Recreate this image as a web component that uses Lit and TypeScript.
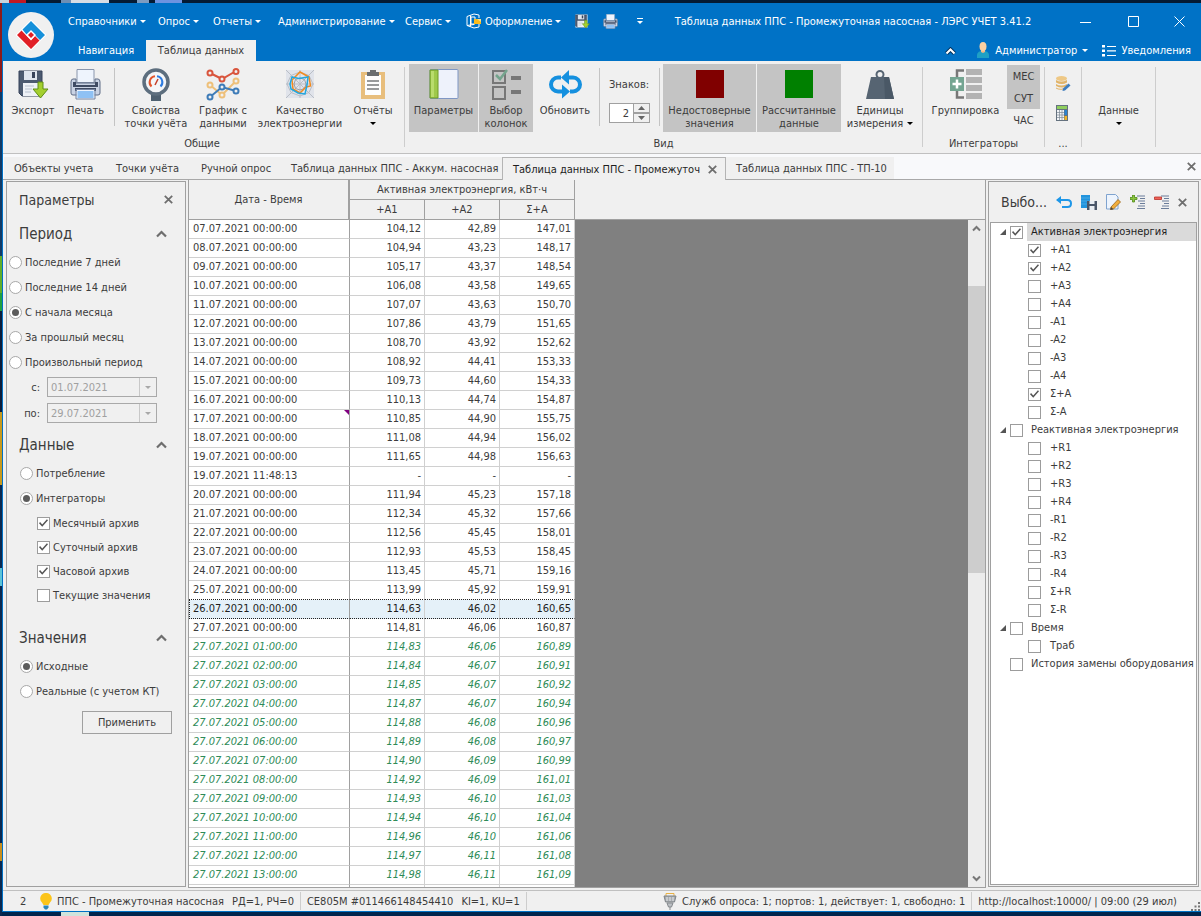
import { LitElement, html, svg, css, nothing } from "lit";
import { customElement } from "lit/decorators.js";

const icon = (w: number, h: number, box: string, body: unknown) =>
  html`<svg width=${w} height=${h} viewBox=${box} aria-hidden="true">${body}</svg>`;

const floppyBody = svg`
  <path d="M1 2h23v25H4l-3-3z" fill="#4c5a70" stroke="#37435a"/>
  <path d="M6 2h13v9H6z" fill="#dfe5ee"/><path d="M14 3h3v6h-3z" fill="#37435a"/>
  <path d="M5 14h15v13H5z" fill="#eef1f6"/><path d="M7 17h9M7 20h7M7 23h6" stroke="#b7c0ce"/>
  <path d="M20 13h5v7h5l-7.500 9-7.500-9h5z" fill="#a4cf2f" stroke="#5f8f14"/>`;
const printerBody = svg`
  <path d="M7 0.500h17v13H7z" fill="#eef4fd" stroke="#8a96ac"/>
  <path d="M3 10q-2 0-2 3v11q0 2 2 2h25q2 0 2-2V13q0-3-2-3h-3v4H6v-4z" fill="#c9d2e3" stroke="#5f6c86"/>
  <path d="M3 13h3v3h19v-3h3v5H3z" fill="#3f4b63"/>
  <path d="M5 19h21v3H5z" fill="#3f4b63"/>
  <path d="M7 21.500h17v8H7z" fill="#8fc1f4" stroke="#eef4fd"/><path d="M6 20.500h19v9.500H6z" fill="none" stroke="#7583a0"/>`;

const ICONS: Record<string, unknown> = {
  blank: icon(28, 28, "0 0 28 28", nothing),
  floppy: icon(31, 31, "0 0 31 31", floppyBody),
  floppySmall: icon(15, 15, "0 0 31 31", svg`<path d="M1 1h25v27H1z" fill="#e6ecf5"/>${floppyBody}`),
  printer: icon(31, 31, "0 0 31 31", printerBody),
  printerSmall: icon(15, 15, "0 0 31 31", printerBody),
  meter: icon(28, 33, "0 0 28 33", svg`
    <path d="M9 24h10v9H9z" fill="#4e6070"/><circle cx="14" cy="14" r="12" fill="#f4f6f8" stroke="#5d6e7e" stroke-width="3.500"/>
    <path d="M9.500 18.500A6 6 0 0 1 13 8.200" fill="none" stroke="#e2542b" stroke-width="2"/>
    <path d="M15 8.200A6 6 0 0 1 18.500 18.500" fill="none" stroke="#2c7be0" stroke-width="2"/>
    <path d="M13 17l3-6" stroke="#c5402b" stroke-width="1.500"/>`),
  chart: icon(34, 33, "0 0 34 33", svg`<g fill="none" stroke-width="2">
    <g stroke="#eec07a"><path d="M4 17l12 10 14-14"/><circle cx="4" cy="17" r="2.500" fill="#f0f0f0"/><circle cx="16" cy="27" r="2.500" fill="#f0f0f0"/><circle cx="30" cy="13" r="2.500" fill="#f0f0f0"/></g>
    <g stroke="#3e7cb8"><path d="M4 29l12-10 14 4"/><circle cx="4" cy="29" r="2.500" fill="#f0f0f0"/><circle cx="16" cy="19" r="2.500" fill="#f0f0f0"/><circle cx="30" cy="23" r="2.500" fill="#f0f0f0"/></g>
    <g stroke="#d9553d"><path d="M4 5l12 6 14-8"/><circle cx="4" cy="5" r="2.500" fill="#f0f0f0"/><circle cx="16" cy="11" r="2.500" fill="#f0f0f0"/><circle cx="30" cy="3.500" r="2.500" fill="#f0f0f0"/></g></g>`),
  radar: icon(28, 28, "0 0 28 28", svg`<path d="M0 0h28v28H0z" fill="#e0e3ea"/>
    <g fill="none" stroke="#b9bec6"><path d="M14 0v28M0 14h28M0 0l28 28M28 0L0 28"/><path d="M14 2l9 3.500 4 8.500-4 8.500-9 3.500-9-3.500L1 14l4-8.500z"/><path d="M14 8l4.500 1.500L20 14l-1.500 4.500L14 20l-4.500-1.500L8 14l1.500-4.500z" stroke="#9aa0a8"/></g>
    <path d="M14 2l9 5 1.500 9-4.500 1-6 6-7-4-1-9z" fill="none" stroke="#f28a1e" stroke-width="1.500"/>
    <path d="M6 7l7 1.500 9-1.500-1 8-2 9-7-1-7-4-1-5z" fill="none" stroke="#22a7e0" stroke-width="1.500"/>`),
  clipboard: icon(24, 29, "0 0 24 29", svg`<path d="M0 2h24v27H0z" fill="#e8be7c"/><path d="M4 5h16v20H4z" fill="#fdfdfd"/>
    <path d="M6 2h3V0h6v2h3v4H6z" fill="#6b6e70"/><path d="M6 11h12M6 15h12M6 19h12" stroke="#77797b" stroke-width="1.500"/>`),
  panel: icon(30, 30, "0 0 30 30", svg`<rect x="1" y="0.500" width="28" height="29" rx="1" fill="#eef2fb" stroke="#7f97c4"/>
    <path d="M1 1h8v28H1z" fill="#9fc94a" stroke="#6f9a26"/><path d="M2 2h3v26H2z" fill="#b9dc6c"/>`),
  columns: icon(29, 31, "0 0 29 31", svg`<g fill="none" stroke="#777" stroke-width="2"><path d="M1 2h12v12H1zM1 18h12v12H1z"/></g>
    <path d="M19 9h10M19 23h10" stroke="#777" stroke-width="4"/><path d="M4 6l4 4 7-9" fill="none" stroke="#74a48d" stroke-width="2.500"/>`),
  refresh: icon(33, 29, "0 0 33 29", svg`<g fill="none" stroke="#1590df" stroke-width="4"><path d="M12 7.500H9a6.500 6.500 0 0 0 0 14h6"/><path d="M21 21.500h3a6.500 6.500 0 0 0 0-14h-6"/></g>
    <path d="M13 14.500l8 7-8 7zM20 0v14.500l-8-7z" fill="#1590df"/>`),
  red: icon(28, 28, "0 0 28 28", svg`<path d="M0 0h28v28H0z" fill="#800000"/>`),
  green: icon(28, 28, "0 0 28 28", svg`<path d="M0 0h28v28H0z" fill="#008000"/>`),
  weight: icon(28, 29, "0 0 28 29", svg`<path d="M5 7h18l5 22H0z" fill="#566472"/><path d="M12 7h6l1 22h9L23 7z" fill="#4a5866"/><circle cx="14" cy="4.500" r="3.500" fill="#f0f0f0" stroke="#566472" stroke-width="2"/>`),
  group: icon(32, 31, "0 0 32 31", svg`<path d="M16 0h16v6H16zM16 8h16v6H16zM16 16h16v6H16zM16 24h16v6H16z" fill="#b3b3b3"/>
    <path d="M14 1.500H7V8M7 22v6.500h7" fill="none" stroke="#777" stroke-width="2.500"/><path d="M0 8h14v14H0z" fill="#74a592"/><path d="M7 10.500v9M2.500 15h9" stroke="#fff" stroke-width="2.500"/>`),
  coins: icon(15, 16, "0 0 15 16", svg`<ellipse cx="5.500" cy="2.500" rx="5.500" ry="2.500" fill="#eec886"/><path d="M0 4q5 3 11 0v2.500q-5 3-11 0zM0 8q5 3 11 0v2q-5 3-11 0zM0 11.500q3 2 7 1v1q-4 1-7-1z" fill="#e2b468"/><path d="M7 12.500l5.500-5 2 2-5.500 5-2.500.6z" fill="#3f7dbd"/>`),
  calc: icon(12, 16, "0 0 12 16", svg`<path d="M0 0h12v16H0z" fill="#65727f"/><path d="M1 1h10v3H1z" fill="#8fce5e"/><path d="M1 5h7v10H1z" fill="#f2f4f7"/><path d="M1 7.500h7M1 10h7M1 12.500h7M3.500 5v10M6 5v10" stroke="#7d8894" stroke-width=".7"/><path d="M8.500 5H11v5H8.500z" fill="#2b83d0"/><path d="M8.500 11H11v4H8.500z" fill="#efb52a"/>`),
  theme: icon(16, 16, "0 0 16 16", svg`<path d="M1 3.500L8 1l5 1v3M1 3.500v9L8 15l5-1v-3M4.500 2.500v11M1 12.500l7-1" fill="none" stroke="#fff"/><path d="M5 4h4v7H5z" fill="none" stroke="#fff"/><path d="M8 6h7v5H8z" fill="#fbbb1c"/><path d="M11 6h4v3z" fill="#fde28c"/>`),
  user: icon(14, 17, "0 0 14 17", svg`<path d="M1 16q-1-6 4-7h4q5 1 4 7z" fill="#1fa0c5"/><path d="M5 7h4v3l-2 1-2-1z" fill="#f2b98a"/><ellipse cx="7" cy="4.500" rx="3.500" ry="4.500" fill="#fbd0a2"/>`),
  list: icon(14, 12, "0 0 14 12", svg`<path d="M0 0h3v2.500H0zM0 4.500h3V7H0zM0 9h3v2.500H0z" fill="#fff"/><path d="M5 1.500h9M5 5.800h9M5 10.500h9" stroke="#fff" stroke-width="1.200"/>`),
  bulb: icon(12, 17, "0 0 12 17", svg`<path d="M6 0a5.500 5.500 0 0 1 4 9.500L8.500 12h-5L2 9.500A5.500 5.500 0 0 1 6 0z" fill="#fcc419"/><path d="M3.500 12.500h5v2l-1.500 2H5l-1.500-2z" fill="#2a86b8"/>`),
  plug: icon(14, 17, "0 0 14 17", svg`<path d="M3 3V.500h8V3" fill="none" stroke="#e8b145"/><path d="M1 3h12l-1.500 6h-9z" fill="#a9adb1" stroke="#7f8488"/><path d="M4 4v4M7 4v4M10 4v4" stroke="#e5e7e9"/><path d="M4 10h6l-1.500 4h-3z" fill="#bcc0c4" stroke="#85898d"/><path d="M7 14v3" stroke="#85898d"/>`),
  undo: icon(16, 13, "0 0 16 13", svg`<path d="M1 4h10.500q3.500 0 3.500 3.500T11.500 11H6" fill="none" stroke="#1e97e8" stroke-width="2"/><path d="M0 4l5-4v8z" fill="#1e97e8"/>`),
  saveGrid: icon(16, 15, "0 0 16 15", svg`<path d="M0 0h9v13H0z" fill="#2294dd"/><path d="M0 3h9M0 6h9M0 9h9" stroke="#63b6ea" stroke-width=".6"/><path d="M6 6h10v9H6z" fill="#4a5668"/><path d="M8.500 6h5v3h-5zM8.500 11h5v4h-5z" fill="#e9edf2"/>`),
  edit: icon(15, 16, "0 0 15 16", svg`<path d="M.500.500h9l2.500 2.500v12H.500z" fill="#edf4fd" stroke="#7fa3cf"/><path d="M5 13l7-7.500 2.500 2.500-7 7-3 .5z" fill="#f1ae3d" stroke="#9a6417" stroke-width=".8"/><path d="M5 13l2.500 2.200-3.200.600z" fill="#444"/>`),
  addRow: icon(15, 14, "0 0 15 14", svg`<path d="M7 1h8M10 3.500h5M8 6h7M10 8.500h5M8 11h7M7 13.500h8" stroke="#6b7d9a"/><path d="M2.500 0h2v2.500H7v2H4.500V7h-2V4.500H0v-2h2.500z" fill="#8cc63f" stroke="#4f8a17" stroke-width=".8"/>`),
  delRow: icon(15, 14, "0 0 15 14", svg`<path d="M7 1h8M10 3.500h5M8 6h7M10 8.500h5M8 11h7M7 13.500h8" stroke="#6b7d9a"/><path d="M.5 2h7v2.500h-7z" fill="#f0635a" stroke="#b8322a" stroke-width=".8"/>`),
  close: icon(9, 9, "0 0 9 9", svg`<path d="M.800.800l7.400 7.400M8.200.800L.800 8.200" stroke="#6e6e6e" stroke-width="1.800"/>`),
  up: icon(11, 8, "0 0 11 8", svg`<path d="M1 6.500l4.500-4.500L10 6.500" fill="none" stroke="#6e6e6e" stroke-width="2.200"/>`),
  logo: icon(46, 46, "0 0 46 46", svg`<circle cx="23" cy="23" r="23" fill="#f0f0f0"/><path d="M23 7.500L38.500 23 23 38.500 7.500 23z" fill="#fff"/>
    <path d="M14.500 17.500L23 9l14 14-5 5-5-5-4-4-4.500 3.500z" fill="#1590da"/><path d="M13.500 18.500L9 23l14 14 8.500-8.500-4.500-4.500-4 4.500z" fill="#e11f26"/>
    <path d="M23 18l5 5-5 5-5-5z" fill="#fff"/><path d="M23 20l3 3-3 3-3-3z" fill="#e11f26"/>`),
};

interface Tool { pic: string; lines: string[]; size: number; on?: boolean; drop?: "below" | "after" }
const COMMON: Tool[] = [
  { pic: "floppy", lines: ["Экспорт"], size: 52 },
  { pic: "printer", lines: ["Печать"], size: 51 },
];
const COMMON_MORE: Tool[] = [
  { pic: "meter", lines: ["Свойства", "точки учёта"], size: 76 },
  { pic: "chart", lines: ["График с", "данными"], size: 56 },
  { pic: "radar", lines: ["Качество", "электроэнергии"], size: 96 },
  { pic: "clipboard", lines: ["Отчёты"], size: 48, drop: "below" },
];
const VIEW: Tool[] = [
  { pic: "panel", lines: ["Параметры"], size: 69, on: true },
  { pic: "columns", lines: ["Выбор", "колонок"], size: 54, on: true },
  { pic: "refresh", lines: ["Обновить"], size: 62 },
];
const VIEW_MORE: Tool[] = [
  { pic: "red", lines: ["Недостоверные", "значения"], size: 93, on: true },
  { pic: "green", lines: ["Рассчитанные", "данные"], size: 84, on: true },
  { pic: "weight", lines: ["Единицы", "измерения"], size: 76, drop: "after" },
];

const ROWS: string[][] = `07.07.2021 00:00:00|104,12|42,89|147,01
08.07.2021 00:00:00|104,94|43,23|148,17
09.07.2021 00:00:00|105,17|43,37|148,54
10.07.2021 00:00:00|106,08|43,58|149,65
11.07.2021 00:00:00|107,07|43,63|150,70
12.07.2021 00:00:00|107,86|43,79|151,65
13.07.2021 00:00:00|108,70|43,92|152,62
14.07.2021 00:00:00|108,92|44,41|153,33
15.07.2021 00:00:00|109,73|44,60|154,33
16.07.2021 00:00:00|110,13|44,74|154,87
17.07.2021 00:00:00|110,85|44,90|155,75
18.07.2021 00:00:00|111,08|44,94|156,02
19.07.2021 00:00:00|111,65|44,98|156,63
19.07.2021 11:48:13|-|-|-
20.07.2021 00:00:00|111,94|45,23|157,18
21.07.2021 00:00:00|112,34|45,32|157,66
22.07.2021 00:00:00|112,56|45,45|158,01
23.07.2021 00:00:00|112,93|45,53|158,45
24.07.2021 00:00:00|113,45|45,71|159,16
25.07.2021 00:00:00|113,99|45,92|159,91
26.07.2021 00:00:00|114,63|46,02|160,65
27.07.2021 00:00:00|114,81|46,06|160,87
27.07.2021 01:00:00|114,83|46,06|160,89
27.07.2021 02:00:00|114,84|46,07|160,91
27.07.2021 03:00:00|114,85|46,07|160,92
27.07.2021 04:00:00|114,87|46,07|160,94
27.07.2021 05:00:00|114,88|46,08|160,96
27.07.2021 06:00:00|114,89|46,08|160,97
27.07.2021 07:00:00|114,90|46,09|160,99
27.07.2021 08:00:00|114,92|46,09|161,01
27.07.2021 09:00:00|114,93|46,10|161,03
27.07.2021 10:00:00|114,94|46,10|161,04
27.07.2021 11:00:00|114,96|46,10|161,06
27.07.2021 12:00:00|114,97|46,11|161,08
27.07.2021 13:00:00|114,98|46,11|161,09`.split("\n").map((l) => l.split("|"));

interface Node { label: string; checked?: boolean; selected?: boolean; children?: Node[] }
const leaves = (names: string, checked: string[] = []): Node[] =>
  names.split(" ").map((label) => ({ label, checked: checked.includes(label) }));
const TREE: Node[] = [
  { label: "Активная электроэнергия", checked: true, selected: true, children: leaves("+A1 +A2 +A3 +A4 -A1 -A2 -A3 -A4 Σ+A Σ-A", ["+A1", "+A2", "Σ+A"]) },
  { label: "Реактивная электроэнергия", children: leaves("+R1 +R2 +R3 +R4 -R1 -R2 -R3 -R4 Σ+R Σ-R") },
  { label: "Время", children: leaves("Tраб") },
  { label: "История замены оборудования" },
];

const base = css`
  :host, * { box-sizing: border-box; }
  button { font: inherit; color: inherit; background: none; border: 0; padding: 0; margin: 0; white-space: nowrap; }
  svg { display: block; flex: none; }
  .caret { width: 0; height: 0; border: 3px solid transparent; border-top-color: currentColor; border-bottom-width: 0; flex: none; }
  input[type="checkbox"], input[type="radio"] { appearance: none; width: 13px; height: 13px; margin: 0; flex: none; background: #fff; border: 1px solid #9c9c9c; display: grid; place-items: center; }
  input[type="radio"] { border-radius: 50%; border-color: #a8a8a8; }
  input[type="radio"]:checked::before { content: ""; width: 7px; height: 7px; border-radius: 50%; background: #5c5c5c; }
  input[type="checkbox"]:checked::before { content: ""; width: 9px; height: 9px; background: #555; clip-path: polygon(0 52%, 12% 40%, 36% 66%, 88% 8%, 100% 20%, 36% 92%); }
`;

@customElement("app-header")
export class AppHeader extends LitElement {
  static styles = [base, css`
    :host { display: flex; height: 58px; flex: none; padding-left: 5px; background: #0072c6; color: #fff; }
    .logo { padding-top: 9px; }
    .rows { flex: 1; min-width: 0; display: flex; flex-direction: column; justify-content: space-between; }
    .top { display: flex; align-items: center; height: 36px; padding-left: 14px; }
    .item { display: flex; align-items: center; gap: 3px; }
    .menu { display: grid; grid-template-columns: 90px 55px 65px 127px 61px 99px; flex: none; }
    .quick { display: flex; align-items: center; gap: 13px; padding-left: 10px; width: 82px; flex: none; }
    .more { display: grid; justify-items: center; gap: 2px; margin-left: 6px; }
    .more::before { content: ""; width: 6px; height: 1px; background: #fff; }
    .title { flex: 1; margin: 0; text-align: center; font-size: 11px; font-weight: 400; white-space: nowrap; overflow: hidden; padding-right: 2px; }
    .win { display: flex; flex: none; }
    .win button { width: 48px; display: grid; place-items: center; }
    .win button:last-child { width: 44px; }
    .bottom { display: flex; align-items: flex-end; height: 21px; }
    .tab { height: 21px; padding-left: 24px; width: 92px; text-align: left; }
    .tab.active { background: #f0f0f0; color: #3c3c3c; width: 110px; padding: 0; text-align: center; }
    .right { margin-left: auto; display: flex; align-items: center; height: 21px; padding-right: 10px; }
    .right .item { gap: 5px; }
    .right .fold { margin-right: 20px; }
    .right .user { margin-right: 14px; }
  `];
  render() {
    const menu = ["Справочники", "Опрос", "Отчеты", "Администрирование", "Сервис"];
    return html`
      <div class="logo">${ICONS.logo}</div>
      <div class="rows">
        <div class="top">
          <nav class="menu">
            ${menu.map((m) => html`<button class="item">${m}<span class="caret"></span></button>`)}
            <button class="item">${ICONS.theme}Оформление<span class="caret"></span></button>
          </nav>
          <div class="quick">
            <button aria-label="Сохранить">${ICONS.floppySmall}</button>
            <button aria-label="Печать">${ICONS.printerSmall}</button>
            <button class="more" aria-label="Настройка панели"><span class="caret"></span></button>
          </div>
          <h1 class="title">Таблица данных ППС - Промежуточная насосная - ЛЭРС УЧЕТ 3.41.2</h1>
          <div class="win">
            <button aria-label="Свернуть">${icon(11, 11, "0 0 11 11", svg`<path d="M0 6.500h11" stroke="#fff"/>`)}</button>
            <button aria-label="Развернуть">${icon(11, 11, "0 0 11 11", svg`<path d="M.500.500h10v10H.500z" fill="none" stroke="#fff"/>`)}</button>
            <button aria-label="Закрыть">${icon(11, 11, "0 0 11 11", svg`<path d="M.500.500l10 10M10.500.500l-10 10" stroke="#fff"/>`)}</button>
          </div>
        </div>
        <div class="bottom">
          <button class="tab">Навигация</button>
          <button class="tab active">Таблица данных</button>
          <div class="right">
            <button class="fold" aria-label="Свернуть ленту">${icon(11, 8, "0 0 11 8", svg`<path d="M1.500 6.500l4-4 4 4" fill="none" stroke="#00315c" stroke-width="4"/><path d="M1.500 6.500l4-4 4 4" fill="none" stroke="#fff" stroke-width="2"/>`)}</button>
            <button class="item user">${ICONS.user}Администратор<span class="caret"></span></button>
            <button class="item">${ICONS.list}Уведомления</button>
          </div>
        </div>
      </div>`;
  }
}

@customElement("app-ribbon")
export class AppRibbon extends LitElement {
  static styles = [base, css`
    :host { display: flex; height: 93px; flex: none; padding-top: 3px; background: #f0f0f0; border-bottom: 1px solid #c0c0c0; }
    .group { display: flex; flex-direction: column; justify-content: space-between; flex: none; height: 87px; padding: 0 5px 0 4px; background: linear-gradient(#cdcdcd, #cdcdcd) 100% 3px / 1px 80px no-repeat; }
    .common { padding-right: 8px; }
    .row { display: flex; gap: 1px; }
    .caption { text-align: center; line-height: 14px; }
    .tool { height: 68px; display: grid; grid-template-rows: 40px 13px 13px; justify-items: center; line-height: 13px; flex: none; }
    .tool svg { align-self: center; }
    .tool.on, .period.on { background: #c4c4c4; }
    .line { display: flex; align-items: center; gap: 4px; }
    .tool .caret { color: #000; }
    .sep { width: 1px; height: 58px; margin: 4px 2px 0; background: #c4c4c4; }
    .digits { width: 53px; display: flex; flex-direction: column; gap: 12px; padding: 14px 6px 0; line-height: 13px; }
    .spin { display: grid; grid-template-columns: 23px 15px; grid-template-rows: 8px 8px; gap: 2px 1px; width: 41px; height: 20px; border: 1px solid #a0a0a0; background: #a0a0a0; }
    .spin input { grid-row: 1 / 3; width: 23px; height: 18px; border: 0; padding: 0 4px 0 0; text-align: right; font: inherit; color: inherit; background: #fff; }
    .spin button { background: #f0f0f0; display: grid; place-items: center; }
    .periods { display: flex; flex-direction: column; margin-left: 2px; padding-top: 1px; }
    .period { width: 33px; height: 22px; }
    .icons { width: 28px; display: flex; flex-direction: column; align-items: center; gap: 13px; padding-top: 12px; }
    .icons button:last-child { margin-right: 2px; }
    .wide { width: 74px; justify-content: flex-start; align-items: center; }
  `];
  private tool(t: Tool) {
    return html`<button class="tool ${t.on ? "on" : ""}" style="width:${t.size}px">
      ${ICONS[t.pic]}
      ${t.lines.map((l, i) => html`<span class="line">${l}${t.drop === "after" && i === 1 ? html`<span class="caret"></span>` : nothing}</span>`)}
      ${t.drop === "below" ? html`<span class="line"><span class="caret"></span></span>` : nothing}
    </button>`;
  }
  render() {
    return html`
      <section class="group common">
        <div class="row">${COMMON.map(this.tool)}<span class="sep"></span>${COMMON_MORE.map(this.tool)}</div>
        <div class="caption">Общие</div>
      </section>
      <section class="group">
        <div class="row">
          ${VIEW.map(this.tool)}<span class="sep"></span>
          <div class="digits">
            <label for="digits">Знаков:</label>
            <div class="spin">
              <input id="digits" type="text" value="2">
              <button aria-label="Больше">${icon(7, 4, "0 0 7 4", svg`<path d="M0 4l3.500-4L7 4z" fill="#666"/>`)}</button>
              <button aria-label="Меньше">${icon(7, 4, "0 0 7 4", svg`<path d="M0 0l3.500 4L7 0z" fill="#666"/>`)}</button>
            </div>
          </div>
          <span class="sep"></span>${VIEW_MORE.map(this.tool)}
        </div>
        <div class="caption">Вид</div>
      </section>
      <section class="group">
        <div class="row">
          ${this.tool({ pic: "group", lines: ["Группировка"], size: 77 })}
          <div class="periods">
            <button class="period on">МЕС</button><button class="period on">СУТ</button><button class="period">ЧАС</button>
          </div>
        </div>
        <div class="caption">Интеграторы</div>
      </section>
      <section class="group">
        <div class="icons"><button aria-label="Правка данных">${ICONS.coins}</button><button aria-label="Расчёт">${ICONS.calc}</button></div>
        <div class="caption">...</div>
      </section>
      <section class="group wide">
        ${this.tool({ pic: "blank", lines: ["Данные"], size: 64, drop: "below" })}
      </section>`;
  }
}

@customElement("params-panel")
export class ParamsPanel extends LitElement {
  static styles = [base, css`
    :host { display: block; width: 180px; flex: none; border: 1px solid #a0a0a0; background: #f0f0f0; margin: 1px 2px 1px 0; }
    .head { display: flex; align-items: center; justify-content: space-between; padding: 0 12px; }
    h2, h3 { font-weight: 400; margin: 0; font-size: 14px; }
    h3 { font-size: 15px; }
    .title { height: 35px; }
    .section { height: 33px; padding-right: 18px; }
    fieldset { border: 0; margin: 0; padding: 0; min-width: 0; }
    label { display: flex; align-items: center; gap: 3px; height: 25px; white-space: nowrap; }
    .r1 label { padding-left: 2px; }
    .r2 label { padding-left: 13px; }
    .r2 .archive { height: 24px; padding-left: 30px; }
    .range { display: grid; grid-template-columns: 33px 110px; gap: 6px 7px; padding: 2px 0 5px; }
    .range label { height: 20px; justify-content: flex-end; padding: 0; }
    .date { display: flex; height: 20px; border: 1px solid #a9a9a9; }
    .date input { flex: 1; min-width: 0; border: 0; background: none; padding: 0 3px; font: inherit; color: #a0a0a0; }
    .date button { width: 17px; border-left: 1px solid #c8c8c8; color: #a8a8a8; display: grid; place-items: center; }
    .gap { margin-top: 14px; }
    .apply { display: block; width: 90px; height: 23px; border: 1px solid #a0a0a0; margin: 7px 13px 0 auto; }
  `];
  private radio(name: string, label: string, on = false) {
    return html`<label><input type="radio" name=${name} .checked=${on}>${label}</label>`;
  }
  private section(label: string, gap = false) {
    return html`<div class="head section ${gap ? "gap" : ""}"><h3>${label}</h3><button aria-label="Свернуть">${ICONS.up}</button></div>`;
  }
  render() {
    const date = (id: string, label: string, value: string) => html`
      <label for=${id}>${label}</label>
      <div class="date"><input id=${id} type="text" value=${value} disabled><button disabled aria-label="Календарь"><span class="caret"></span></button></div>`;
    return html`
      <div class="head title"><h2>Параметры</h2><button aria-label="Закрыть">${ICONS.close}</button></div>
      ${this.section("Период")}
      <fieldset class="r1">
        ${this.radio("period", "Последние 7 дней")}${this.radio("period", "Последние 14 дней")}
        ${this.radio("period", "С начала месяца", true)}${this.radio("period", "За прошлый месяц")}
        ${this.radio("period", "Произвольный период")}
      </fieldset>
      <div class="range">${date("from", "с:", "01.07.2021")}${date("to", "по:", "29.07.2021")}</div>
      ${this.section("Данные")}
      <fieldset class="r2">
        ${this.radio("data", "Потребление")}${this.radio("data", "Интеграторы", true)}
        ${["Месячный архив", "Суточный архив", "Часовой архив", "Текущие значения"].map((l, i) =>
          html`<label class="archive"><input type="checkbox" .checked=${i < 3}>${l}</label>`)}
      </fieldset>
      ${this.section("Значения", true)}
      <fieldset class="r2">${this.radio("values", "Исходные", true)}${this.radio("values", "Реальные (с учетом КТ)")}</fieldset>
      <button class="apply">Применить</button>`;
  }
}

@customElement("data-grid")
export class DataGrid extends LitElement {
  static styles = [base, css`
    :host { display: flex; flex: 1; min-width: 0; overflow: hidden; border: solid #a0a0a0; border-width: 0 1px 1px; background: #808080; }
    .area { flex: 1; min-width: 0; overflow: hidden; }
    table { width: 100%; table-layout: fixed; border-collapse: separate; border-spacing: 0; }
    .date { width: 161px; }
    .num { width: 75px; }
    th { font-weight: 400; height: 20px; padding: 0; background: #f0f0f0; border: solid #a0a0a0; border-width: 0 1px 1px 0; line-height: 18px; }
    th.date { border-right-width: 2px; }
    th.rest, .cap { border-width: 0 0 1px; }
    td { height: 19px; line-height: 18px; padding: 0 3px; background: #fff; border: solid #d0d0d0; border-width: 0 1px 1px 0; text-align: right; }
    td.when { text-align: left; border-right-color: #a0a0a0; padding-left: 4px; position: relative; }
    td.rest { background: #808080; border: 0; }
    .hourly td { color: #2e8b57; font-style: italic; }
    .current td:not(.rest) { background: #e5f1f9; color: #1e1e1e; border-bottom: 1px dotted #222; }
    .current td.when { border-left: 1px dotted #222; padding-left: 3px; }
    .before td:not(.rest) { border-bottom: 1px dotted #222; }
    .note { position: absolute; top: 0; right: 0; width: 5px; height: 5px; background: #800080; clip-path: polygon(0 0, 100% 0, 100% 100%); }
    .scroll { width: 17px; flex: none; display: flex; flex-direction: column; background: #ececec; }
    .cap { height: 40px; flex: none; background: #f0f0f0; border-style: solid; border-color: #a0a0a0; }
    .scroll button { height: 17px; display: grid; place-items: center; }
    .track { flex: 1; display: grid; grid-template-rows: 49fr 287fr 297fr; }
    .thumb { grid-row: 2; background: #cdcdcd; }
  `];
  render() {
    return html`
      <div class="area">
        <table>
          <colgroup><col class="date"><col class="num"><col class="num"><col class="num"><col></colgroup>
          <thead>
            <tr><th class="date" rowspan="2">Дата - Время</th><th colspan="3">Активная электроэнергия, кВт·ч</th><th class="rest" rowspan="2"></th></tr>
            <tr><th>+A1</th><th>+A2</th><th>Σ+A</th></tr>
          </thead>
          <tbody>
            ${ROWS.map((r, i) => html`<tr class="${i > 21 ? "hourly" : i === 20 ? "current" : i === 19 ? "before" : ""}">
              <td class="when">${r[0]}${i === 10 ? html`<span class="note"></span>` : nothing}</td>
              <td>${r[1]}</td><td>${r[2]}</td><td>${r[3]}</td><td class="rest"></td></tr>`)}
            <tr><td class="when"></td><td></td><td></td><td></td><td class="rest"></td></tr>
          </tbody>
        </table>
      </div>
      <div class="scroll">
        <div class="cap"></div>
        <button aria-label="Вверх">${icon(9, 7, "0 0 9 7", svg`<path d="M1 5.500l3.500-3.500L8 5.500" fill="none" stroke="#777" stroke-width="2"/>`)}</button>
        <div class="track"><div class="thumb"></div></div>
        <button aria-label="Вниз">${icon(9, 7, "0 0 9 7", svg`<path d="M1 1.500L4.500 5 8 1.500" fill="none" stroke="#777" stroke-width="2"/>`)}</button>
      </div>`;
  }
}

@customElement("column-picker")
export class ColumnPicker extends LitElement {
  static styles = [base, css`
    :host { display: flex; flex-direction: column; width: 211px; flex: none; border: 1px solid #a0a0a0; background: #f0f0f0; padding: 0 1px 1px; margin: 1px 2px 1px; }
    .head { display: flex; align-items: center; height: 40px; padding: 0 10px 0 11px; gap: 9px; }
    h2 { font-size: 14px; font-weight: 400; margin: 0 auto 0 0; }
    .tree { flex: 1; border: 1px solid #a0a0a0; background: #fff; margin: 0; padding: 0; list-style: none; overflow: hidden; }
    li ul { list-style: none; margin: 0; padding: 0 0 0 18px; }
    .node { display: flex; align-items: center; height: 18px; padding-left: 9px; }
    .mark { width: 10px; flex: none; }
    label { flex: 1; height: 18px; line-height: 18px; margin-left: 4px; padding-left: 4px; white-space: nowrap; }
    li ul label { padding-left: 5px; }
    .selected { background: #dadada; color: #1e1e1e; }
  `];
  private node(n: Node, id: string): unknown {
    return html`<li>
      <div class="node">
        <span class="mark">${n.children ? icon(6, 6, "0 0 6 6", svg`<path d="M6 0v6H0z" fill="#555"/>`) : nothing}</span>
        <input type="checkbox" id=${id} .checked=${!!n.checked}><label for=${id} class=${n.selected ? "selected" : ""}>${n.label}</label>
      </div>
      ${n.children ? html`<ul>${n.children.map((c, i) => this.node(c, `${id}-${i}`))}</ul>` : nothing}
    </li>`;
  }
  render() {
    const tools = [["undo", "Отменить"], ["saveGrid", "Сохранить"], ["edit", "Изменить"], ["addRow", "Развернуть все"], ["delRow", "Свернуть все"], ["close", "Закрыть"]];
    return html`
      <div class="head"><h2>Выбо...</h2>${tools.map(([k, l]) => html`<button aria-label=${l}>${ICONS[k]}</button>`)}</div>
      <ul class="tree">${TREE.map((n, i) => this.node(n, `n${i}`))}</ul>`;
  }
}

@customElement("app-root")
export class AppRoot extends LitElement {
  static styles = [base, css`
    :host {
      display: flex; height: 100vh; padding: 3px 0 4px 2px; overflow: hidden;
      font: 11px "DejaVu Sans Condensed", "DejaVu Sans", sans-serif; color: #3c3c3c;
      background:
        linear-gradient(90deg, #c9d3dc 0 9px, #c01824 9px 26px, #041a33 26px 61px, #6f8fb4 61px 71px, #d8dde4 71px 109px, #041a33 109px 137px, #7d9cc0 137px 149px, #041a33 149px 155px, #6d93e0 155px 182px, #041a33 182px) 0 0 / 100% 3px no-repeat,
        linear-gradient(90deg, transparent 61px, #cfe3dc 61px 89px, transparent 89px) 0 100% / 100% 4px no-repeat,
        linear-gradient(#8c1a1a 0 10%, #123a66 10% 28%, #5fae2a 28% 32%, #20a040 32% 34%, #0a1c3a 34% 45%, #c79a1e 45% 53%, #0a2850 53% 62%, #5cc4d8 62% 64%, #0a2850 64% 92%, #c98f1e 92% 94%, #0a2850 94%) 0 0 / 2px 100% no-repeat,
        #00244c;
    }
    .window { flex: 1; min-width: 0; display: flex; flex-direction: column; border: solid #0072c6; border-width: 0 0 1px 1px; background: #f0f0f0; }
    .tabs { display: flex; height: 26px; padding: 3px 0 0 1px; background: #f8f9fb; border-bottom: 1px solid #a8a8a8; align-items: stretch; flex: none; }
    .tab { background: #f0f0f0; padding: 0 9px 0 10px; text-align: left; overflow: hidden; flex: none; }
    .tab.active { border: 1px solid #b4b4b4; border-bottom: 0; margin-bottom: -1px; width: 224px; display: flex; align-items: center; justify-content: space-between; padding: 0 8px 0 10px; color: #1e1e1e; }
    .tab.active button { display: block; }
    .close { margin: 0 5px 3px auto; }
    .w1 { width: 102px; } .w2 { width: 85px; } .w3 { width: 90px; } .w4 { width: 221px; } .w5 { width: 168px; }
    .main { flex: 1; min-height: 0; display: flex; padding-left: 3px; }
    .status { display: flex; align-items: center; height: 21px; flex: none; background: #f0f0f0; border-top: 1px solid #c0c0c0; white-space: nowrap; margin-top: 2px; }
    .status > span { display: flex; align-items: center; gap: 5px; }
    .status i { width: 1px; height: 18px; background: #cdcdcd; margin: 0 6px; }
    .count { width: 37px; padding-left: 17px; }
    .rd { padding-left: 8px; }
    .right { margin-left: auto; }
    .grip { padding: 8px 1px 0 14px; align-self: flex-end; }
  `];
  render() {
    return html`
      <div class="window">
        <app-header></app-header>
        <app-ribbon></app-ribbon>
        <nav class="tabs">
          <button class="tab w1">Объекты учета</button>
          <button class="tab w2">Точки учёта</button>
          <button class="tab w3">Ручной опрос</button>
          <button class="tab w4">Таблица данных ППС - Аккум. насосная</button>
          <div class="tab active"><span>Таблица данных ППС - Промежуточ</span><button aria-label="Закрыть вкладку">${ICONS.close}</button></div>
          <button class="tab w5">Таблица данных ППС - ТП-10</button>
          <button class="close" aria-label="Закрыть">${ICONS.close}</button>
        </nav>
        <main class="main">
          <params-panel></params-panel>
          <data-grid></data-grid>
          <column-picker></column-picker>
        </main>
        <footer class="status">
          <span class="count">2</span>
          <span>${ICONS.bulb}ППС - Промежуточная насосная</span>
          <span class="rd">РД=1, РЧ=0</span><i></i>
          <span>CE805M #011466148454410</span><span class="rd">KI=1, KU=1</span><i></i>
          <span class="right">${ICONS.plug}Служб опроса: 1; портов: 1, действует: 1, свободно: 1</span><i></i>
          <span>http://localhost:10000/ | 09:00 (29 июл)</span>
          <span class="grip">${icon(9, 9, "0 0 9 9", svg`<path d="M7 0h2v2H7zM3.500 3.500h2v2h-2zM7 3.500h2v2H7zM0 7h2v2H0zM3.500 7h2v2h-2zM7 7h2v2H7z" fill="#777"/>`)}</span>
        </footer>
      </div>`;
  }
}
